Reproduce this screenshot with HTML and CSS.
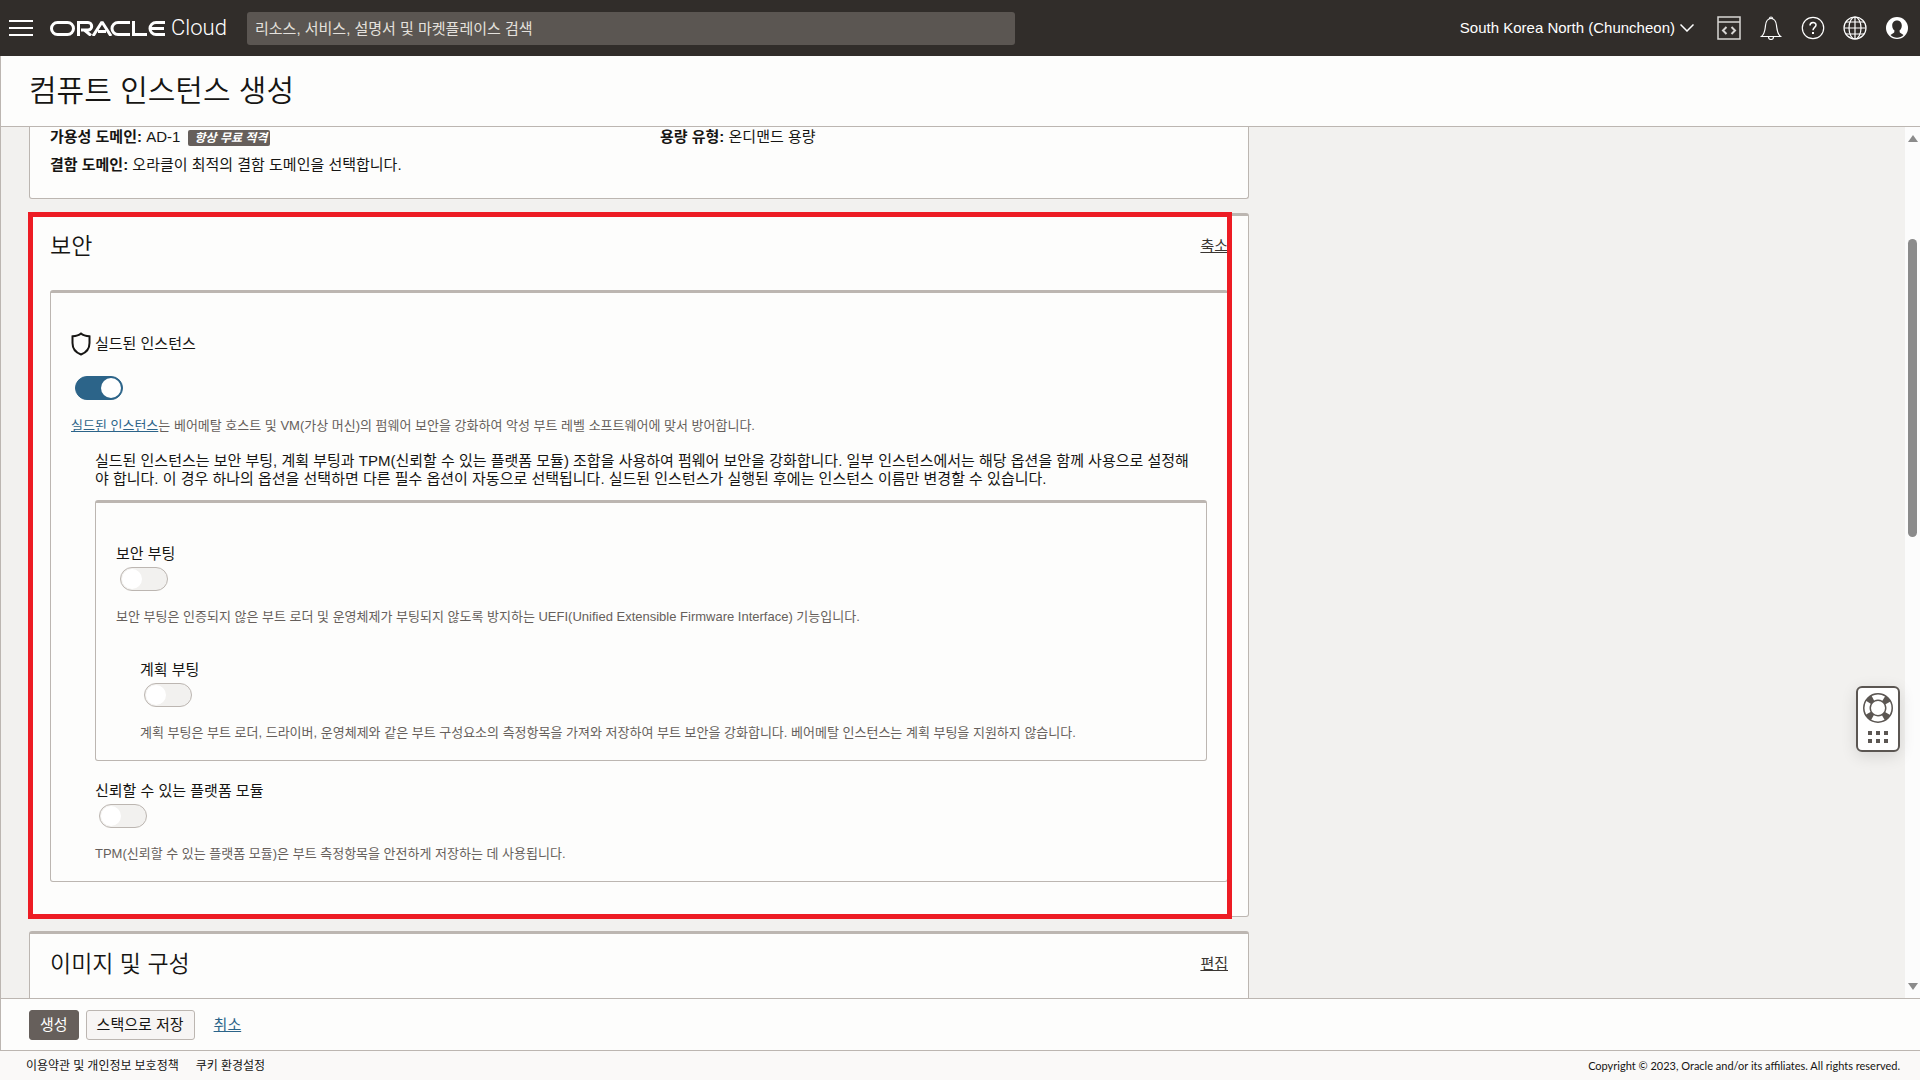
FILE: index.html
```html
<!DOCTYPE html>
<html lang="ko">
<head>
    <meta charset="UTF-8">
    <meta name="viewport" content="width=device-width, initial-scale=1.0">
    <title>컴퓨트 인스턴스 생성 | Oracle Cloud</title>
    <link rel="stylesheet" href="styles.css">
</head>
<body>

    <header class="topbar">
        <button class="icon-btn menu-btn" type="button" aria-label="탐색 메뉴">
            <svg width="24" height="24" viewBox="0 0 24 24" stroke="#fff" stroke-width="2"><path d="M0 5h24M0 12h24M0 19h24"/></svg>
        </button>
        <a class="brand" href="#" aria-label="Oracle Cloud">
            <!-- Oracle 로고 -->
            <svg class="brand-logo" width="115" height="15" viewBox="0 0 115 15" fill="none" stroke="#fff" stroke-width="3">
                <rect x="1.5" y="1.5" width="22" height="12" rx="6"/>
                <path d="M28.5 15V1.5h9.500a3.700 3.700 0 0 1 0 7.400H31M34 8.900l7 5.600"/>
                <path d="M43 15l8.500-13.200h1L61 15M48 10.500h8"/>
                <path d="M80 1.500H68a6 6 0 0 0 0 12h12"/>
                <path d="M83.500 0v13.500H97"/>
                <path d="M115 1.500h-9a6 6 0 0 0 0 12h9M101 7.500h13"/>
            </svg>
            <span class="brand-name">Cloud</span>
        </a>
        <input class="search" type="search" aria-label="검색" placeholder="리소스, 서비스, 설명서 및 마켓플레이스 검색">
        <nav class="tools">
            <button class="region" type="button">
                South Korea North (Chuncheon)
                <svg width="14" height="8" viewBox="0 0 14 8" fill="none" stroke="#fff" stroke-width="1.500"><path d="M.5.5L7 7 13.500.5"/></svg>
            </button>
            <button class="icon-btn" type="button" aria-label="개발자 도구">
                <svg width="24" height="24" viewBox="0 0 24 24" fill="none" stroke="#d8d6d4" stroke-width="1.500"><path d="M1 1h22v22H1zM1 6h22" /><path d="M9.500 11L6 14.500 9.500 18M14.500 11l3.500 3.500-3.500 3.500" stroke-width="2"/></svg>
            </button>
            <button class="icon-btn" type="button" aria-label="알림">
                <svg width="24" height="24" viewBox="0 0 24 24" fill="none" stroke="#fff" stroke-width="1.200"><path d="M2.500 20.500h19c-3.500-3-3.500-7-4-11C17 5 15.500 2.500 12 2.500S7 5 6.500 9.500c-.5 4-.5 8-4 11zM10.500 2.500a1.500 1.500 0 0 1 3 0M9.500 21a2.500 2.500 0 0 0 5 0"/></svg>
            </button>
            <button class="icon-btn" type="button" aria-label="도움말">
                <svg width="24" height="24" viewBox="0 0 24 24" fill="none" stroke="#fff" stroke-width="1.200"><circle cx="12" cy="12" r="10.700"/><path d="M9 9.500c0-4 6-4 6-.5 0 2.500-3 2.300-3 5.300" stroke-width="1.500"/><path d="M12 16v2" stroke-width="2"/></svg>
            </button>
            <button class="icon-btn" type="button" aria-label="언어">
                <svg width="24" height="24" viewBox="0 0 24 24" fill="none" stroke="#fff" stroke-width="1.200"><circle cx="12" cy="12" r="11"/><ellipse cx="12" cy="12" rx="6" ry="11"/><path d="M12 1v22M1 12h22M3 6h18M3 18h18"/></svg>
            </button>
            <button class="icon-btn" type="button" aria-label="프로파일">
                <svg width="24" height="24" viewBox="0 0 24 24"><circle cx="12" cy="12" r="11" fill="#fff"/><path d="M12 4.500c-3 0-4.800 2.200-4.800 5 0 2.500 1 4 2.300 5l-.3 2-3.700 2.500C9 22.500 15 22.500 18.500 19l-3.700-2.500-.3-2c1.300-1 2.300-2.500 2.300-5 0-2.800-1.800-5-4.800-5z" fill="#312d2a"/></svg>
            </button>
        </nav>
    </header>

    <main class="page">
        <div class="page-title">
            <h1>컴퓨트 인스턴스 생성</h1>
        </div>

        <div class="scroll-area">
            <div class="content">

                <section class="card card-placement">
                    <p><b>가용성 도메인:</b> AD-1 <span class="badge">항상 무료 적격</span></p>
                    <p><b>용량 유형:</b> 온디맨드 용량</p>
                    <p><b>결함 도메인:</b> 오라클이 최적의 결함 도메인을 선택합니다.</p>
                </section>

                <section class="card card-security">
                    <div class="card-head">
                        <h2>보안</h2>
                        <a href="#">축소</a>
                    </div>

                    <div class="panel">
                        <div class="field">
                            <label class="field-label shield-label" for="shielded">
                                <svg width="20" height="24" viewBox="0 0 20 24" fill="none" stroke="#161513" stroke-width="2"><path d="M10 1.500C8 3.200 5 4 1.500 4.300V11c0 5.500 3 9.500 8.500 11.500 5.500-2 8.500-6 8.500-11.500V4.300C15 4 12 3.200 10 1.500z"/></svg>
                                실드된 인스턴스
                            </label>
                            <input class="toggle" type="checkbox" id="shielded" checked>
                            <p class="hint"><a href="#">실드된 인스턴스</a>는 베어메탈 호스트 및 VM(가상 머신)의 펌웨어 보안을 강화하여 악성 부트 레벨 소프트웨어에 맞서 방어합니다.</p>
                        </div>

                        <div class="options">
                            <p class="desc">실드된 인스턴스는 보안 부팅, 계획 부팅과 TPM(신뢰할 수 있는 플랫폼 모듈) 조합을 사용하여 펌웨어 보안을 강화합니다. 일부 인스턴스에서는 해당 옵션을 함께 사용으로 설정해야 합니다. 이 경우 하나의 옵션을 선택하면 다른 필수 옵션이 자동으로 선택됩니다. 실드된 인스턴스가 실행된 후에는 인스턴스 이름만 변경할 수 있습니다.</p>

                            <div class="panel panel-boot">
                                <div class="field">
                                    <label class="field-label" for="secure-boot">보안 부팅</label>
                                    <input class="toggle" type="checkbox" id="secure-boot">
                                    <p class="hint">보안 부팅은 인증되지 않은 부트 로더 및 운영체제가 부팅되지 않도록 방지하는 UEFI(Unified Extensible Firmware Interface) 기능입니다.</p>
                                </div>
                                <div class="field field-nested">
                                    <label class="field-label" for="measured-boot">계획 부팅</label>
                                    <input class="toggle" type="checkbox" id="measured-boot">
                                    <p class="hint">계획 부팅은 부트 로더, 드라이버, 운영체제와 같은 부트 구성요소의 측정항목을 가져와 저장하여 부트 보안을 강화합니다. 베어메탈 인스턴스는 계획 부팅을 지원하지 않습니다.</p>
                                </div>
                            </div>

                            <div class="field">
                                <label class="field-label" for="tpm">신뢰할 수 있는 플랫폼 모듈</label>
                                <input class="toggle" type="checkbox" id="tpm">
                                <p class="hint">TPM(신뢰할 수 있는 플랫폼 모듈)은 부트 측정항목을 안전하게 저장하는 데 사용됩니다.</p>
                            </div>
                        </div>
                    </div>
                    <div class="highlight"></div>
                </section>

                <section class="card">
                    <div class="card-head">
                        <h2>이미지 및 구성</h2>
                        <a href="#">편집</a>
                    </div>
                </section>

            </div>

            <div class="scrollbar">
                <span class="arrow arrow-up"></span>
                <div class="track"><div class="thumb"></div></div>
                <span class="arrow arrow-down"></span>
            </div>
        </div>

        <div class="actions">
            <button class="btn btn-primary" type="button">생성</button>
            <button class="btn" type="button">스택으로 저장</button>
            <a href="#">취소</a>
        </div>
    </main>

    <footer class="footer">
        <a href="#">이용약관 및 개인정보 보호정책</a>
        <a href="#">쿠키 환경설정</a>
        <span class="copyright">Copyright © 2023, Oracle and/or its affiliates. All rights reserved.</span>
    </footer>

    <button class="support" type="button" aria-label="지원">
        <svg width="30" height="52" viewBox="0 0 30 52">
            <circle cx="15" cy="15" r="11" fill="none" stroke="#5b5652" stroke-width="8"/>
            <circle cx="15" cy="15" r="11" fill="none" stroke="#fff" stroke-width="5" stroke-dasharray="11.280 6" stroke-dashoffset="5.640"/>
            <path d="M5 38h4v4H5zM13 38h4v4h-4zM21 38h4v4h-4zM5 46h4v4H5zM13 46h4v4h-4zM21 46h4v4h-4z" fill="#5b5652"/>
        </svg>
    </button>

</body>
</html>
```
FILE: styles.css
```css
* {
    box-sizing: border-box;
}
body {
    font-family: "Liberation Sans", "Noto Sans CJK KR", sans-serif;
    font-size: 15px;
    line-height: 18px;
    color: #161513;
    background-color: #faf9f8;
    display: flex;
    flex-direction: column;
    height: 100vh;
    margin: 0;
    overflow: hidden;
}
h1, h2, p {
    margin: 0;
    font-weight: normal;
}
button, input {
    font: inherit;
}
a {
    color: #2c6489;
}

/* Верхняя панель */
.topbar {
    display: flex;
    align-items: center;
    height: 56px;
    padding: 0 11px 0 9px;
    background-color: #312d2a;
    color: #fff;
    flex-shrink: 0;
}
.icon-btn {
    display: flex;
    padding: 0;
    border: none;
    background: none;
    cursor: pointer;
}
.brand {
    display: flex;
    align-items: center;
    gap: 6px;
    width: 178px;
    margin-left: 17px;
    color: #fff;
    text-decoration: none;
}
.brand-name {
    font-family: Roboto, sans-serif;
    font-size: 22px;
    font-weight: 300;
    line-height: 24px;
}
.search {
    flex: 0 1 768px;
    height: 33px;
    margin-left: 19px;
    padding: 0 8px;
    border: none;
    border-radius: 3px;
    background-color: #5b5652;
    color: #fff;
}
.search::placeholder {
    color: #e4e1dd;
    opacity: 1;
}
.tools {
    display: flex;
    align-items: center;
    gap: 18px;
    margin-left: auto;
}
.region {
    display: flex;
    align-items: center;
    gap: 5px;
    padding: 0;
    margin-right: 5px;
    border: none;
    background: none;
    color: #fff;
    cursor: pointer;
}

.page {
    display: flex;
    flex-direction: column;
    flex: 1;
    min-height: 0;
    border-left: 1px solid #bcb6b1;
    background-color: #fdfdfc;
}
.page-title {
    padding: 17px 28px;
    border-bottom: 1px solid #bcb6b1;
}
h1 {
    font-size: 30px;
    font-weight: 350;
    line-height: 36px;
}

.scroll-area {
    display: flex;
    flex: 1;
    min-height: 0;
    background-color: #f2f1ef;
}
.content {
    flex: 1;
    padding-left: 28px;
    overflow: hidden;
}
.card {
    position: relative;
    max-width: 1220px;
    margin-bottom: 14px;
    padding: 16px 20px 34px;
    border: 1px solid #bcb6b1;
    border-top-width: 3px;
    border-radius: 3px;
    background-color: #fdfdfc;
}
.card-placement {
    display: grid;
    grid-template-columns: 1fr 1fr;
    gap: 8px 42px;
    padding: 0 20px 23px;
    border-top: none;
    border-radius: 0 0 3px 3px;
    line-height: 20px;
}
.badge {
    display: inline-block;
    margin-left: 4px;
    padding: 0 3px 0 6px;
    border-radius: 2px;
    background-color: #665f5b;
    color: #fff;
    font-size: 12px;
    font-style: italic;
    font-weight: bold;
    line-height: 16px;
}
.card-head {
    display: flex;
    justify-content: space-between;
    align-items: center;
    margin-bottom: 30px;
}
.card-head a {
    color: #3a3632;
}
h2 {
    font-size: 23px;
    font-weight: 350;
    line-height: 28px;
}

.panel {
    padding: 39px 20px 18px;
    border: 1px solid #bcb6b1;
    border-top-width: 3px;
    border-radius: 3px;
}
.panel-boot {
    margin: 12px 0 21px;
    padding-top: 42px;
}
.options {
    margin: 17px 0 0 24px;
}
.field-label {
    display: block;
}
.shield-label {
    display: flex;
    align-items: center;
    gap: 4px;
    margin-bottom: 20px;
}
.field-nested {
    margin: 35px 0 0 24px;
}
.toggle {
    appearance: none;
    display: flex;
    width: 48px;
    height: 24px;
    margin: 4px 4px 17px;
    padding: 1px;
    border: 1px solid #bcb6b1;
    border-radius: 12px;
    background-color: #f2f1ef;
    cursor: pointer;
}
.toggle::before {
    content: "";
    width: 20px;
    height: 20px;
    border-radius: 50%;
    background-color: #fff;
}
.toggle:checked {
    justify-content: flex-end;
    border-color: #2c6489;
    background-color: #2c6489;
}
.hint {
    color: #665f5b;
    font-size: 13px;
}
.desc {
    padding-right: 10px;
    word-break: break-all;
}

/* Рамка вокруг раздела */
.highlight {
    position: absolute;
    top: -4px;
    right: 16px;
    bottom: -3px;
    left: -2px;
    border: 5px solid #ed1c24;
    pointer-events: none;
}

.scrollbar {
    display: flex;
    flex-direction: column;
    align-items: center;
    width: 15px;
    padding: 8px 0;
    background-color: #fcfcfc;
}
.arrow {
    border: 5px solid transparent;
}
.arrow-up {
    border-top: none;
    border-bottom: 7px solid #8b8b8b;
}
.arrow-down {
    border-bottom: none;
    border-top: 7px solid #8b8b8b;
}
.track {
    flex: 1;
    width: 9px;
    padding: 97px 0;
}
.thumb {
    height: 46%;
    border-radius: 5px;
    background-color: #8b8b8b;
}

.actions {
    display: flex;
    align-items: center;
    gap: 7px;
    padding: 11px 28px 10px;
    border-top: 1px solid #bcb6b1;
    border-bottom: 1px solid #bcb6b1;
}
.actions a {
    margin-left: 12px;
}
.btn {
    height: 30px;
    padding: 0 10px;
    border: 1px solid #bcb6b1;
    border-radius: 3px;
    background-color: #f7f5f4;
    color: #161513;
    cursor: pointer;
}
.btn-primary {
    border-color: #665f5b;
    background-color: #665f5b;
    color: #fff;
}

.footer {
    display: flex;
    align-items: center;
    gap: 17px;
    height: 29px;
    padding: 0 20px 0 26px;
    font-family: Lato, "Noto Sans CJK KR", sans-serif;
    font-size: 12px;
    flex-shrink: 0;
}
.footer a {
    color: #161513;
    text-decoration: none;
}
.copyright {
    margin-left: auto;
    font-size: 11px;
}

.support {
    position: fixed;
    right: 20px;
    bottom: 328px;
    padding: 5px;
    border: 2px solid #5b5652;
    border-radius: 6px;
    background-color: #fff;
    box-shadow: 0 4px 16px rgba(0, 0, 0, 0.12);
    cursor: pointer;
}
.support svg {
    display: block;
}
```
